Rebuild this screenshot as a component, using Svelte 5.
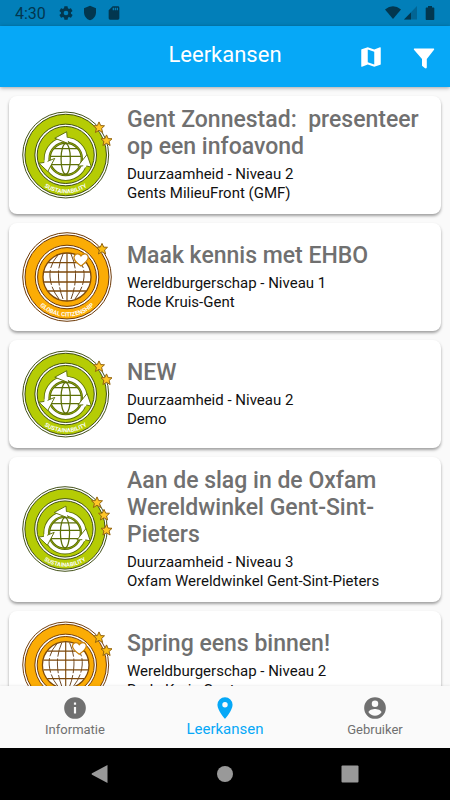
<script>
  const courses = [
    { title: 'Gent Zonnestad:\u00a0 presenteer op een infoavond', theme: 'Duurzaamheid', level: 2, org: 'Gents MilieuFront (GMF)' },
    { title: 'Maak kennis met EHBO', theme: 'Wereldburgerschap', level: 1, org: 'Rode Kruis-Gent' },
    { title: 'NEW', theme: 'Duurzaamheid', level: 2, org: 'Demo' },
    { title: 'Aan de slag in de Oxfam Wereldwinkel Gent-Sint-Pieters', theme: 'Duurzaamheid', level: 3, org: 'Oxfam Wereldwinkel Gent-Sint-Pieters' },
    { title: 'Spring eens binnen!', theme: 'Wereldburgerschap', level: 2, org: 'Rode Kruis-Gent' }
  ];

  // The disc shrinks a little as more stars stick out of its edge.
  const discs = {
    1: { scale: 1, cx: 45, stars: [[80, 17]] },
    2: { scale: 0.97, cx: 43.7, stars: [[77, 17.5], [84.5, 30.5]] },
    3: { scale: 0.955, cx: 43, stars: [[75, 18.5], [82, 31], [84.5, 46]] }
  };
  const star = 'M0-5.6 1.7-1.9 5.5-1.7 2.6 1 3.6 5 0 2.8-3.6 5-2.6 1-5.5-1.7-1.7-1.9Z';
</script>

{#snippet badge(theme, level, id)}
  {@const green = theme === 'Duurzaamheid'}
  {@const fill = green ? '#b5cc05' : '#fbac05'}
  {@const line = green ? '#3c4a10' : '#6e3a08'}
  {@const d = discs[level]}
  <svg class="badge" viewBox="0 0 90 90" role="img" aria-label="{theme} {level}">
    <g transform="translate({d.cx} 45) scale({d.scale})">
      <g stroke={line} stroke-width="1">
        <circle r="44.3" fill="#fff" />
        <circle r="42" {fill} />
        <circle r="31.8" fill="#fff" />
        <circle r="29.4" {fill} />
      </g>
      {#if green}
        <g transform="translate(0 4)" stroke="#5d7008" stroke-width="1" stroke-linejoin="round">
          <circle r="19.8" fill="none" stroke-width="5.6" />
          <circle r="19.8" fill="none" stroke="#fff" stroke-width="3.8" />
          <circle r="16" fill="#fff" stroke-width="1.200" />
          <g fill="none" stroke-width="1.300">
            <path d="M-12-10.500H12M-15.800-2.500H15.800M-15 6H15" />
            <ellipse rx="4.800" ry="15.800" />
          </g>
          <g fill="#fff">
            <path d="M-11.300-21.300 1-28 1.500-22.500 3.500-15.500Z" />
            <path d="M22-4.500 26.500 8.500 20 7 12.500 7.500Z" />
            <path d="M-18.500 13-27.500 4.500-21 3.500-11.300-.5Z" />
          </g>
          <g stroke="#fff" stroke-width="3.200">
            <path d="M0-20.500 4-19.800" />
            <path d="M20 6 19.300 8.500" />
            <path d="M-20.500 4.500-20.200 1" />
          </g>
        </g>
      {:else}
        <circle r="24" fill="#fff" stroke="#7d4a0c" stroke-width="1.300" />
        <g fill="none" stroke="#6b4520" stroke-width="1">
          <path d="M0-24V24" stroke="#7d4a0c" stroke-width="1.200" />
          <path d="M-9-22Q-18-12-17 0T-8 22M-4-23Q-9-12-8.500 0T-4 22M4-23Q9-12 8.500 0T4 22M9-22Q18-12 17 0T8 22" stroke-dasharray="15 2" />
          <path stroke="#7d4a0c" stroke-width="1.300" d="M-19-14.300H19M-23-5H23M-23 5H23M-19 14H19" />
        </g>
        <path fill="#fff" stroke="#c98209" stroke-width="1.200" d="M14-11C10-14 6.500-16.500 7-20 8-24 12.500-24 14-21 16-24 20.500-24 21.200-20 21.500-16.500 18-14 14-11Z" />
      {/if}
      <path id="arc-{id}" d="M-39.500 0A39.500 39.500 0 0 0 39.500 0" fill="none" />
      <text class="legend">
        <textPath href="#arc-{id}" startOffset="50%">{green ? 'SUSTAINABILITY' : 'GLOBAL CITIZENSHIP'}</textPath>
      </text>
    </g>
    {#each d.stars as [x, y]}
      <path d={star} transform="translate({x} {y})" fill={green ? '#ffc627' : '#f9bd14'} stroke="#936410" stroke-width="1" stroke-linejoin="round" />
    {/each}
  </svg>
{/snippet}

<div class="screen">
  <div class="status">
    <span class="clock">4:30</span>
    <svg width="16" height="16" viewBox="0 0 24 24"><path d="M19.400 13a7.500 7.500 0 0 0 0-2l2.100-1.700c.2-.1.200-.4.100-.6l-2-3.500c-.1-.2-.4-.3-.6-.2l-2.500 1a7 7 0 0 0-1.700-1l-.4-2.600a.5.500 0 0 0-.5-.4h-4a.5.500 0 0 0-.5.400L9.100 5a7 7 0 0 0-1.700 1l-2.500-1c-.2-.1-.5 0-.6.200l-2 3.500c-.1.200-.1.500.1.600L4.500 11a7.500 7.500 0 0 0 0 2l-2.100 1.700c-.2.100-.2.400-.1.600l2 3.500c.1.200.4.300.6.200l2.500-1a7 7 0 0 0 1.700 1l.4 2.600c0 .2.200.4.500.4h4c.3 0 .5-.2.500-.4l.4-2.600a7 7 0 0 0 1.700-1l2.500 1c.2.100.5 0 .6-.2l2-3.500c.1-.2.100-.5-.1-.6ZM12 15.500a3.500 3.500 0 1 1 0-7 3.500 3.500 0 0 1 0 7Z" /></svg>
    <svg width="16" height="16" viewBox="0 0 24 24"><path d="M12 1 3 5v6c0 5.500 3.800 10.700 9 12 5.200-1.300 9-6.500 9-12V5Z" /></svg>
    <svg width="16" height="16" viewBox="0 0 24 24"><path d="M18 2h-8L4 8v12a2 2 0 0 0 2 2h12a2 2 0 0 0 2-2V4a2 2 0 0 0-2-2Zm-6 6h-2V4h2Zm3 0h-2V4h2Zm3 0h-2V4h2Z" /></svg>
    <span class="spacer"></span>
    <svg width="32" height="14" viewBox="0 0 32 14">
      <path d="M0 3.500Q8-3 16 3.500L8 13Z" />
      <path d="M32 0V13.500H19Z" opacity=".35" />
      <path d="M26 6.500V13.500H19Z" />
    </svg>
    <svg width="10" height="14" viewBox="0 0 10 14"><path d="M3 0h4v1.500h1.500q.8 0 .8.800v10.900q0 .8-.8.800h-7q-.8 0-.8-.8V2.300q0-.8.800-.8H3Z" /></svg>
  </div>

  <header>
    <h1>Leerkansen</h1>
    <div class="actions">
      <button aria-label="Kaart"><svg width="26" height="26" viewBox="0 0 24 24"><path d="m20.500 3-.2 0L15 5.100 9 3 3.400 4.900a.5.500 0 0 0-.4.500v15.100a.5.500 0 0 0 .5.500h.2L9 18.900l6 2.100 5.600-1.900a.5.500 0 0 0 .4-.5V3.500a.5.500 0 0 0-.5-.5ZM15 19l-6-2.100V5l6 2.100Z" /></svg></button>
      <button aria-label="Filter"><svg width="26" height="26" viewBox="0 0 26 26"><path d="M3.200 4.500H22.800Q23.600 4.800 23 5.800L15.800 15V23.500Q15.200 25 13.700 24L11 21.700V15L3 5.800Q2.400 4.800 3.200 4.500Z" /></svg></button>
    </div>
  </header>

  <main>
    {#each courses as c, i}
      <article>
        {@render badge(c.theme, c.level, i)}
        <div class="info">
          <h2>{c.title}</h2>
          <p>{c.theme} - Niveau {c.level}</p>
          <p>{c.org}</p>
        </div>
      </article>
    {/each}
  </main>

  <nav class="tabs">
    <a href="#informatie">
      <svg width="26" height="26" viewBox="0 0 24 24"><path d="M12 2a10 10 0 1 0 0 20 10 10 0 0 0 0-20Zm1 15h-2v-6h2Zm0-8h-2V7h2Z" /></svg>
      Informatie
    </a>
    <a href="#leerkansen" class="active" aria-current="page">
      <svg width="26" height="26" viewBox="0 0 24 24"><path d="M12 2a7 7 0 0 0-7 7c0 5.250 7 13 7 13s7-7.750 7-13a7 7 0 0 0-7-7Zm0 9.500a2.500 2.500 0 1 1 0-5 2.500 2.500 0 0 1 0 5Z" /></svg>
      Leerkansen
    </a>
    <a href="#gebruiker">
      <svg width="26" height="26" viewBox="0 0 24 24"><path d="M12 2a10 10 0 1 0 0 20 10 10 0 0 0 0-20Zm0 3a3 3 0 1 1 0 6 3 3 0 0 1 0-6Zm0 14.200a7.200 7.200 0 0 1-6-3.220c.03-1.990 4-3.080 6-3.080s5.970 1.090 6 3.080a7.200 7.200 0 0 1-6 3.220Z" /></svg>
      Gebruiker
    </a>
  </nav>

  <div class="system">
    <button aria-label="Terug"><svg width="18" height="18" viewBox="0 0 18 18"><path d="M16.500 0V18L1 9.800Q0 9 1 8.200Z" /></svg></button>
    <button aria-label="Start"><svg width="18" height="18" viewBox="0 0 18 18"><circle cx="9" cy="9" r="8" /></svg></button>
    <button aria-label="Overzicht"><svg width="18" height="18" viewBox="0 0 18 18"><rect x=".5" y=".5" width="17" height="17" rx="1" /></svg></button>
  </div>
</div>

<style>
  .screen {
    display: flex;
    flex-direction: column;
    height: 100vh;
    background: #fafafa;
    color: #111;
    font-family: Roboto, "Noto Sans", sans-serif;
  }
  svg { display: block; fill: currentColor; flex: none; }
  button { border: 0; padding: 0; background: none; color: inherit; font: inherit; }
  h1, h2, p { margin: 0; font-weight: 400; }

  .status {
    display: flex;
    align-items: center;
    flex: none;
    gap: 8px;
    height: 26px;
    padding: 0 15px;
    box-sizing: border-box;
    background: #027fb9;
    color: #02374f;
    font-size: 16px;
  }
  .clock { margin-right: 4px; }
  .spacer { flex: 1; }

  header {
    position: relative;
    z-index: 1;
    display: grid;
    grid-template-columns: 1fr auto 1fr;
    align-items: center;
    flex: none;
    height: 61px;
    padding: 0 13px;
    background: #06a8f7;
    color: #fff;
    box-shadow: 0 1px 4px rgba(0, 0, 0, .35);
  }
  h1 { grid-column: 2; font-size: 22px; line-height: 28px; padding-bottom: 4px; }
  .actions { display: flex; justify-content: flex-end; gap: 27px; }

  main {
    display: flex;
    flex-direction: column;
    flex: 1;
    gap: 9px;
    min-height: 0;
    padding: 9px 9px 0;
    overflow: hidden;
  }
  article {
    display: flex;
    align-items: center;
    flex: none;
    gap: 15px;
    min-height: 108px;
    box-sizing: border-box;
    padding: 10px 13px 11px;
    border-radius: 8px;
    background: #fff;
    box-shadow: 0 2px 3px rgba(0, 0, 0, .36);
  }
  .badge { width: 90px; height: 90px; margin: -5px 0; }
  .legend {
    fill: #fff;
    font-size: 6px;
    font-weight: 700;
    text-anchor: middle;
  }
  .info { flex: 1; min-width: 0; }
  h2 {
    margin-bottom: 5px;
    color: #707070;
    font-size: 23px;
    font-weight: 500;
    line-height: 27px;
  }
  p { font-size: 15px; line-height: 19px; }

  .tabs {
    display: grid;
    grid-template-columns: repeat(3, 1fr);
    flex: none;
    height: 62px;
    background: #fafafa;
    box-shadow: 0 -1px 2px rgba(0, 0, 0, .06);
  }
  .tabs a {
    display: flex;
    flex-direction: column;
    align-items: center;
    padding-top: 9px;
    color: #707070;
    font-size: 13px;
    line-height: 18px;
    text-decoration: none;
  }
  .tabs .active { color: #06a8f7; font-size: 15px; line-height: 16px; }

  .system {
    display: flex;
    justify-content: center;
    align-items: center;
    flex: none;
    gap: 107px;
    height: 52px;
    background: #000;
    color: #999;
  }
</style>
